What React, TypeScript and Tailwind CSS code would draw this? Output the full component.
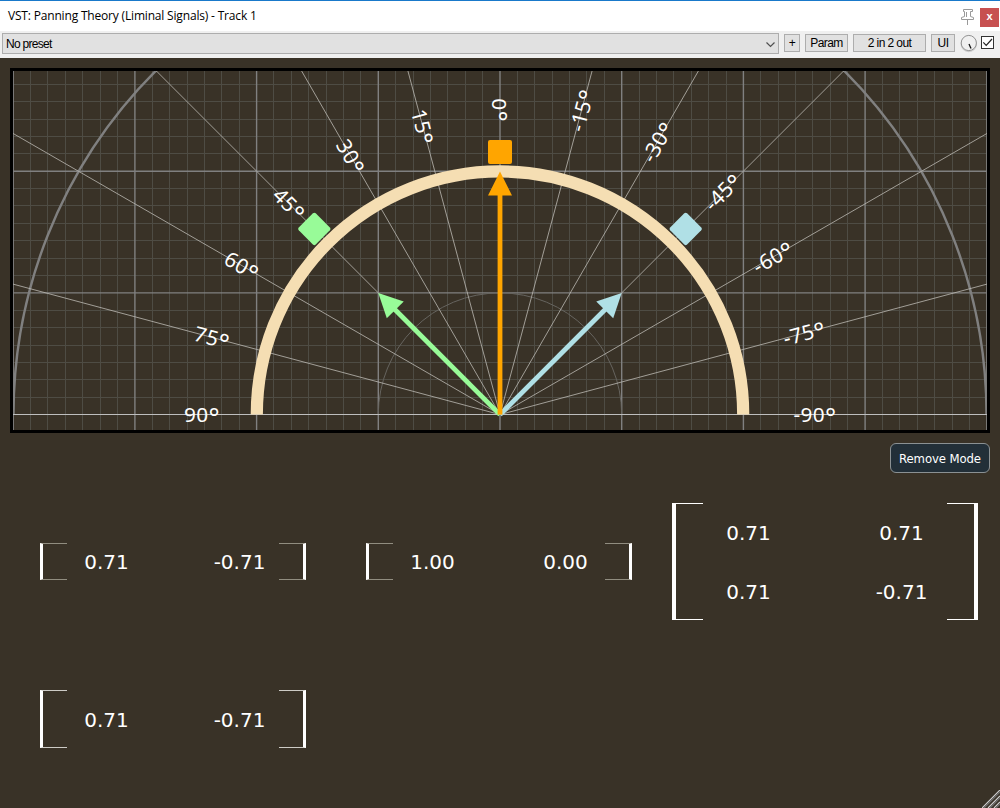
import React from "react";

const CX = 487;
const CY = 343.6;
const UNIT = 121.7;

function polar(angle: number, r: number): [number, number] {
  const t = (angle * Math.PI) / 180;
  return [CX - r * Math.sin(t), CY - r * Math.cos(t)];
}

function range(from: number, to: number) {
  return Array.from({ length: to - from + 1 }, (_, i) => from + i);
}

const ANGLES = [75, 60, 45, 30, 15, -15, -30, -45, -60, -75];
const LABELS = [90, 75, 60, 45, 30, 15, 0, -15, -30, -45, -60, -75, -90];

const SOURCES = [
  { angle: 45, length: 172.1, color: "#98fb98" },
  { angle: -45, length: 172.1, color: "#b0e0e6" },
  { angle: 0, length: 243, color: "#ffa500" },
];

function PanningDial() {
  return (
    <svg width="974" height="359" viewBox="0 0 974 359" className="block overflow-visible">
      <clipPath id="upper">
        <rect x="0" y="0" width="974" height="344" />
      </clipPath>
      <clipPath id="frame">
        <rect x="0" y="0" width="974" height="359" />
      </clipPath>
      <g clipPath="url(#frame)">
        <g stroke="#4e4c44" strokeWidth="1">
          {range(-28, 28)
            .filter((i) => i % 7 !== 0)
            .map((i) => {
              const x = Math.floor(CX + (i * UNIT) / 7) + 0.5;
              return <line key={i} x1={x} x2={x} y1="0" y2="359" />;
            })}
          {range(1, 19)
            .filter((i) => i % 7 !== 0)
            .map((i) => {
              const y = Math.floor(CY - (i * UNIT) / 7) + 0.5;
              return <line key={i} x1="0" x2="974" y1={y} y2={y} />;
            })}
        </g>
        <g stroke="#808080" strokeWidth="1.4">
          {range(-4, 4).map((i) => (
            <line key={i} x1={CX + i * UNIT} x2={CX + i * UNIT} y1="0" y2="359" />
          ))}
          <line x1="0" x2="974" y1={CY - UNIT} y2={CY - UNIT} />
          <line x1="0" x2="974" y1={CY - 2 * UNIT} y2={CY - 2 * UNIT} />
        </g>
        <circle cx={CX} cy={CY} r={UNIT} fill="none" stroke="#66645f" strokeWidth="1" clipPath="url(#upper)" />
        <path d={`M0.5 ${CY}A486.5 486.5 0 0 1 973.5 ${CY}`} fill="none" stroke="#808080" strokeWidth="2.4" />
        <g stroke="#bdbab4" strokeWidth="0.8">
          {ANGLES.map((a) => {
            const [x, y] = polar(a, 600);
            return <line key={a} x1={CX} y1={CY} x2={x} y2={y} />;
          })}
        </g>
        <line x1="0" x2="974" y1="343.5" y2="343.5" stroke="#bebebe" strokeWidth="1" />
      </g>
      <path
        d={`M${CX - 243.2} ${CY}A243.2 243.2 0 0 1 ${CX + 243.2} ${CY}`}
        fill="none"
        stroke="#f5deb3"
        strokeWidth="12.2"
      />
      <g fill="#fff" fontSize="20.8" textAnchor="middle" fontFamily="'Noto Sans', sans-serif">
        {LABELS.map((a) => {
          const [x, y] = polar(a, a > 0 ? 298 : a < 0 ? 315 : 304.5);
          const rot = a >= 0 ? 90 - a : -90 - a;
          return (
            <text key={a} transform={`translate(${x} ${y}) rotate(${rot})`} y="7.7" letterSpacing="0.3">
              {a}
              <tspan fontSize="26" dy="4.4">
                °
              </tspan>
            </text>
          );
        })}
      </g>
      {SOURCES.map((s) => (
        <g key={s.angle} transform={`translate(${CX} ${CY}) rotate(${-s.angle})`} fill={s.color}>
          <rect x="-12" y="-274.6" width="24" height="24" rx="2" />
          <rect x="-2.4" y={-s.length + 22} width="4.8" height={s.length - 22} />
          <path d={`M0 ${-s.length}L12 ${-s.length + 24}H-12Z`} />
        </g>
      ))}
    </svg>
  );
}

function ToolButton({ className, children }: { className: string; children: React.ReactNode }) {
  return (
    <button
      className={`flex h-[18px] items-center justify-center border border-[#adadad] bg-[#e1e1e1] text-[12px] leading-none tracking-[-0.6px] text-black ${className}`}
    >
      {children}
    </button>
  );
}

function Matrix({
  rows,
  size,
  side,
  tick,
}: {
  rows: string[][];
  size: string;
  side: string;
  tick: string;
}) {
  return (
    <div className={`relative flex flex-col ${size}`}>
      <div className={`absolute inset-y-0 left-0 border-r-0 ${side} ${tick}`} />
      <div className={`absolute inset-y-0 right-0 border-l-0 ${side} ${tick}`} />
      {rows.map((row, i) => (
        <div key={i} className="flex flex-1 items-center">
          {row.map((v, j) => (
            <span key={j} className="flex-1 text-center leading-5">
              {v}
            </span>
          ))}
        </div>
      ))}
    </div>
  );
}

export default function App() {
  return (
    <div className="relative flex h-[808px] w-[1000px] flex-col overflow-hidden bg-[#393227] font-['Liberation_Sans',sans-serif]">
      <header className="flex h-[31px] shrink-0 items-center border-t border-[#1979ca] bg-white pl-2">
        <h1 className="grow font-['Open_Sans',sans-serif] text-[12px] tracking-[-0.18px] text-black">
          VST: Panning Theory (Liminal Signals) - Track 1
        </h1>
        <svg width="16" height="18" viewBox="0 0 16 18" className="mt-[2px] mr-[4px]" fill="none" stroke="#999">
          <path d="M3.5 1.5h9v2h-2v5l3 1v2h-12v-2l3-1v-5h-1zM7.5 12v5M6.5 4v5" />
        </svg>
        <button className="mt-[3px] mr-px flex h-[19px] w-[19px] items-center justify-center bg-[#c75050] pb-[2px] text-[11px] font-bold text-white">
          x
        </button>
      </header>
      <div className="flex h-[27px] shrink-0 items-start bg-[#f0f0f0] pt-[3px] pl-[2px] text-black">
        <div className="-mt-px mr-[5px] flex h-[21px] w-[777px] items-center justify-between border border-[#adadad] bg-[#e1e1e1] pt-px pr-[2px] pl-[3px] text-[12px] tracking-[-0.7px]">
          <span>No preset</span>
          <svg width="11" height="7" viewBox="0 0 11 7" fill="none" stroke="#505050" strokeWidth="1.2">
            <path d="M1.5 1.5l4 4 4-4" />
          </svg>
        </div>
        <ToolButton className="mr-[5px] w-[16px]">+</ToolButton>
        <ToolButton className="mr-[5px] w-[43px]">Param</ToolButton>
        <ToolButton className="mr-[5px] w-[73px]">2 in 2 out</ToolButton>
        <ToolButton className="mr-[5px] w-[24px]">UI</ToolButton>
        <svg width="18" height="20" viewBox="0 0 18 20" className="mr-[3px]">
          <circle cx="8.8" cy="10" r="7.6" fill="none" stroke="#ccc" strokeWidth="1.2" />
          <circle cx="8.8" cy="9" r="7.6" fill="#f0f0f0" stroke="#888" strokeWidth="0.9" />
          <path d="M9 10l2 4.5" stroke="#111" strokeWidth="1.3" />
        </svg>
        <svg width="13" height="13" viewBox="0 0 13 13" className="mt-[2px]">
          <rect x="0.5" y="0.5" width="12" height="12" fill="#fff" stroke="#333" />
          <path d="M2.3 6.3l2.9 3L11 3" fill="none" stroke="#222" strokeWidth="1.2" />
        </svg>
      </div>
      <section className="mx-[10px] mt-[10px] h-[365px] shrink-0 border-3 border-black">
        <PanningDial />
      </section>
      <div className="mt-[10px] flex h-[30px] shrink-0 justify-end pr-[10px]">
        <button className="h-[30px] w-[100px] rounded-[6px] border border-[#8b9193] bg-[#222f38] pt-px font-['DejaVu_Sans_Condensed','Noto_Sans',sans-serif] text-[13px] tracking-[-0.1px] whitespace-nowrap text-white">
          Remove Mode
        </button>
      </div>
      <main className="mt-[30px] flex flex-col gap-[70px] pl-[40px] font-['DejaVu_Sans',sans-serif] text-[20px] text-white">
        <div className="flex h-[117px] items-center">
          <Matrix
            rows={[["0.71", "-0.71"]]}
            size="h-[37px] w-[266px] mr-[60px]"
            side="w-[27px] border-x-[3px] border-x-white"
            tick="border-y border-y-[#918d80]"
          />
          <Matrix
            rows={[["1.00", "0.00"]]}
            size="h-[37px] w-[266px] mr-[40px]"
            side="w-[27px] border-x-[3px] border-x-white"
            tick="border-y border-y-[#918d80]"
          />
          <Matrix
            rows={[
              ["0.71", "0.71"],
              ["0.71", "-0.71"],
            ]}
            size="h-[117px] w-[306px] gap-[2px] pt-px"
            side="w-[31px] border-x-[4px] border-x-white"
            tick="border-y border-y-white"
          />
        </div>
        <Matrix
          rows={[["0.71", "-0.71"]]}
          size="h-[58px] w-[266px] pt-[2px]"
          side="w-[27px] border-x-[3px] border-x-white"
          tick="border-y border-y-[#cdcbc6]"
        />
      </main>
      <svg width="18" height="18" viewBox="0 0 18 18" className="absolute right-0 bottom-0" fill="none">
        <path d="M0 18L18 0M6 18L18 6M12 18L18 12" stroke="#d0d0d0" strokeWidth="1.2" />
        <path d="M2 18L18 2M8 18L18 8M14 18L18 14" stroke="#707070" strokeWidth="1.2" />
      </svg>
    </div>
  );
}
